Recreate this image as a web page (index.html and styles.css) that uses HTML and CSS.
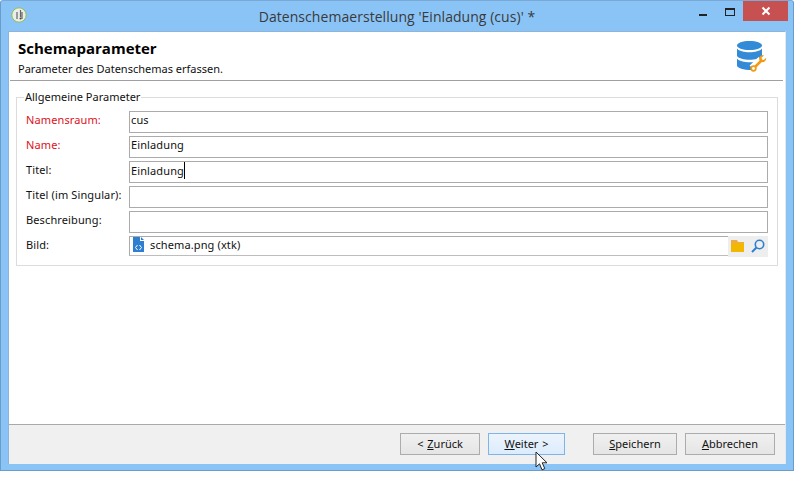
FILE: index.html
```html
<!DOCTYPE html>
<html lang="de">
<head>
<meta charset="utf-8">
<title>Datenschemaerstellung</title>
<link rel="stylesheet" href="styles.css">
</head>
<body>
<div class="window">
  <div class="titlebar">
    <svg class="appicon" width="16" height="16" viewBox="0 0 16 16"><circle cx="8" cy="8" r="7.2" fill="#ecece9" stroke="#8fbf4e" stroke-width="1"/><path d="M6 5v7M9.500 3v7M11 5v7" stroke="#666" stroke-width="1.200" fill="none"/><circle cx="9.500" cy="11.500" r="1" fill="#444"/></svg>
    <div class="title">Datenschemaerstellung 'Einladung (cus)' *</div>
    <div class="controls">
      <span class="min"></span>
      <span class="max"></span>
      <span class="close"><svg width="10" height="10" viewBox="0 0 10 10"><path d="M1.5 1.5l7 7M8.5 1.5l-7 7" stroke="#fff" stroke-width="2"/></svg></span>
    </div>
  </div>
  <div class="client">
    <div class="head">
      <div class="headtext">
        <div class="h1">Schemaparameter</div>
        <div class="h2">Parameter des Datenschemas erfassen.</div>
      </div>
      <svg class="dbicon" width="32" height="32" viewBox="0 0 32 32">
        <path d="M0 4.500C0 2 5.500 0 12.500 0S25 2 25 4.500 19.500 9 12.500 9 0 7 0 4.500Z" fill="#338ad6"/>
        <path d="M0 7.500C2 10 7 11.200 12.500 11.200S23 10 25 7.500V15C23 17.500 18 18.800 12.500 18.800S2 17.500 0 15Z" fill="#338ad6"/>
        <path d="M0 17.500C2 20 7 21.200 12.500 21.200c3 0 5-.2 7-.8L14 29C7 29 0 27 0 24.500Z" fill="#338ad6"/>
        <path d="M15 27l9-8.500" stroke="#fff" stroke-width="7" fill="none"/>
        <path d="M17 27l8-8" stroke="#f29a12" stroke-width="2.500" fill="none"/>
        <circle cx="16.500" cy="27.500" r="2.300" fill="#fff" stroke="#f29a12" stroke-width="1.700"/>
        <path d="M27 14.500l-2.500 2.300.5 1.800 1.800.5 2.400-2.300c.2 2.500-1.700 4.700-4.500 4.300-2.500-.5-3.300-3.300-2-5.300 1-1.300 2.700-1.800 4.300-1.300Z" fill="#f29a12"/>
      </svg>
    </div>
    <div class="main">
      <fieldset class="group">
        <legend>Allgemeine Parameter</legend>
        <div class="row"><label class="req">Namensraum:</label><div class="field">cus</div></div>
        <div class="row"><label class="req">Name:</label><div class="field">Einladung</div></div>
        <div class="row"><label>Titel:</label><div class="field">Einladung<span class="caret"></span></div></div>
        <div class="row"><label>Titel (im Singular):</label><div class="field"></div></div>
        <div class="row"><label>Beschreibung:</label><div class="field"></div></div>
        <div class="row last"><label>Bild:</label>
          <div class="field link">
            <svg class="fileicon" width="11" height="15" viewBox="0 0 11 15"><path d="M0 0h7v4h4v11H0Z" fill="#2f7fd0"/><path d="M8 0l3 3H8Z" fill="#2f7fd0"/><path d="M4.500 8l-2 2.500 2 2.500M6.500 8l2 2.500-2 2.500" stroke="#fff" fill="none"/></svg>
            <span>schema.png (xtk)</span>
          </div>
          <div class="tools">
            <svg width="14" height="12" viewBox="0 0 14 12"><path d="M0 0h6l1 2h6v2H0Z" fill="#eda94a"/><rect y="3" width="13" height="9" fill="#f0b800"/></svg>
            <svg width="14" height="14" viewBox="0 0 14 14"><circle cx="8.500" cy="5.500" r="4.200" fill="none" stroke="#2f7fd0" stroke-width="1.600"/><path d="M5.500 8.500L1 13" stroke="#2f7fd0" stroke-width="2"/></svg>
          </div>
        </div>
      </fieldset>
    </div>
    <div class="foot">
      <div class="btn b1">&lt; <u>Z</u>urück</div>
      <div class="btn b2 hot"><u>W</u>eiter &gt;</div>
      <div class="btn b3"><u>S</u>peichern</div>
      <div class="btn b4"><u>A</u>bbrechen</div>
    </div>
  </div>
  <svg class="cursor" width="13" height="20" viewBox="0 0 13 20"><path d="M1 1v15l3.500-3.200 2.500 6 2.800-1.200-2.600-5.800H12Z" fill="#fff" stroke="#222" stroke-width="1"/></svg>
</div>
</body>
</html>
```
FILE: styles.css
```css
* { box-sizing: border-box; }
html, body { margin: 0; padding: 0; background: #fff; }
body { width: 810px; height: 491px; overflow: hidden; font-family: "Noto Sans", "Liberation Sans", sans-serif; font-size: 11px; color: #111; }
.window { position: relative; width: 794px; height: 471px; background: #8ac4f7; border: 1px solid #6a9ccc; border-top-color: #7aa9d6; border-radius: 3px 3px 0 0; display: flex; flex-direction: column; padding: 0 7px 6px 7px; }
.titlebar { height: 30px; flex: none; display: flex; align-items: center; position: relative; }
.appicon { position: absolute; left: 3px; top: 6px; }
.title { width: 100%; text-align: center; font-family: "Open Sans", sans-serif; font-size: 14px; letter-spacing: 0.05px; color: #3a3a3a; padding-top: 1px; }
.controls { position: absolute; top: 0; right: -2px; display: flex; align-items: flex-start; }
.min { width: 8px; height: 2px; background: #222; margin: 13px 18px 0 0; }
.max { width: 10px; height: 8px; border: 1px solid #222; border-top-width: 2px; margin: 7px 8px 0 0; }
.close { width: 45px; height: 20px; background: #c75050; display: flex; align-items: center; justify-content: center; }
.client { flex: 1; background: #fff; border: solid #8eb4da; border-width: 1px 1px 0 1px; border-right-color: #e4e8ec; display: flex; flex-direction: column; min-height: 0; }
.head { height: 49px; flex: none; margin: 0 2px 0 1px; border-bottom: 1px solid #a0a0a0; display: flex; justify-content: space-between; padding: 7px 14px 0 8px; }
.h1 { font-family: "Open Sans", sans-serif; font-weight: 700; font-size: 15px; line-height: 18px; color: #000; }
.h2 { line-height: 14px; margin-top: 5px; }
.dbicon { margin-top: 2px; }
.main { flex: 1; padding: 9px 7px 0 7px; }
.group { margin: 0; padding: 7px 9px 8px 9px; border: 1px solid #dcdcdc; min-width: 0; }
.group legend { padding: 0 1px; margin-left: -2px; line-height: 14px; font-size: 11px; }
.row { display: flex; align-items: center; height: 22px; margin-bottom: 3px; letter-spacing: 0.12px; }
.row.last { height: 21px; margin-bottom: 0; align-items: flex-start; }
.row label { width: 103px; flex: none; padding-bottom: 5px; }
.row.last label { line-height: 14px; padding: 2px 0 0; }
.req { color: #e01020; }
.field { flex: 1; height: 22px; border: 1px solid #ababab; padding-left: 1px; line-height: 16px; background: #fff; white-space: nowrap; }
.link { height: 20px; border-right: 0; display: flex; align-items: center; gap: 6px; padding: 0 0 3px 3px; border-bottom-color: #bdbdbd; }
.caret { display: inline-block; width: 1px; height: 17px; background: #000; vertical-align: -4px; }
.tools { width: 40px; height: 21px; flex: none; background: #eeeeee; display: flex; align-items: center; justify-content: space-between; padding: 0 3px 1px 3px; }
.foot { height: 40px; flex: none; background: #f0f0f0; border-top: 1px solid #a9a9a9; display: flex; align-items: flex-start; padding: 8px 0 0 391px; }
.btn { height: 22px; border: 1px solid #acacac; background: linear-gradient(#f0f0f0, #e5e5e5); display: flex; align-items: center; justify-content: center; white-space: pre; word-spacing: 1px; padding-bottom: 2px; }
.b1 { width: 80px; margin-right: 8px; }
.b2 { width: 77px; margin-right: 28px; }
.b3 { width: 84px; margin-right: 8px; }
.b4 { width: 90px; }
.hot { border-color: #7eb4ea; background: linear-gradient(#ecf4fc, #dcecfc); }
.cursor { position: absolute; left: 534px; top: 450px; }
```
